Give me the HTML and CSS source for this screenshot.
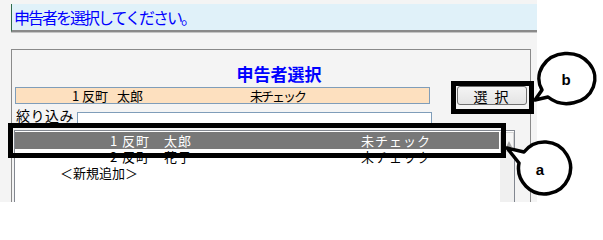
FILE: index.html
```html
<!DOCTYPE html>
<html lang="ja">
<head>
<meta charset="utf-8">
<title>申告者選択</title>
<link rel="stylesheet" href="styles.css">
</head>
<body>
<div class="screen">
  <div class="header">申告者を選択してください。</div>
  <div class="panel">
    <div class="title">申告者選択</div>
    <div class="select-row">
      <div class="current">
        <span class="num">1</span><span class="name">反町 太郎</span><span class="status">未チェック</span>
      </div>
      <button class="btn">選 択</button>
    </div>
    <div class="filter-row">
      <span class="filter-label">絞り込み</span>
      <div class="filter-input"></div>
    </div>
    <div class="list">
      <div class="rows">
        <div class="row selected"><span class="num">1</span><span class="name">反町　太郎</span><span class="status">未チェック</span></div>
        <div class="row"><span class="num">2</span><span class="name">反町　花子</span><span class="status">未チェック</span></div>
        <div class="row new">＜新規追加＞</div>
      </div>
      <div class="scrollbar"><div class="up"><span class="arrow"></span></div></div>
    </div>
  </div>
</div>
<div class="mark mark-list"></div>
<div class="mark mark-btn"></div>
<svg class="callouts" width="603" height="221" viewBox="0 0 603 221">
  <path d="M542,90 L535,100 L548,97 A28,25 0 1 0 542,90 Z" fill="#fff" stroke="#000" stroke-width="3.5" stroke-linejoin="round"/>
  <text x="566" y="85" class="callout-label">b</text>
  <path d="M524,152 L507,148 L519,163 A26,26 0 1 0 524,152 Z" fill="#fff" stroke="#000" stroke-width="3.5" stroke-linejoin="round"/>
  <text x="540" y="175" class="callout-label">a</text>
</svg>
</body>
</html>
```

FILE: styles.css
```css
html, body {
  margin: 0;
  padding: 0;
  background: #ffffff;
}
body {
  position: relative;
  width: 603px;
  height: 221px;
  overflow: hidden;
  font-family: "Noto Sans CJK JP", "Noto Sans", sans-serif;
  color: #000;
}
.screen {
  width: 537px;
  height: 202px;
  overflow: hidden;
  background: #f4f4f4;
  padding-top: 4px;
  box-sizing: border-box;
}
.header {
  margin-left: 11px;
  height: 26px;
  line-height: 26px;
  background: #e0f1f9;
  border-left: 1px solid #2e6b4a;
  border-bottom: 2px solid #8a8a8a;
  box-shadow: 0 1px 0 #c4c4c4;
  color: #0000ff;
  font-size: 16px;
  letter-spacing: -2px;
  padding-left: 2px;
  white-space: nowrap;
}
.panel {
  margin-top: 17px;
  margin-left: 11px;
  width: 520px;
  height: 160px;
  box-sizing: border-box;
  border: 1px solid #8a8a8a;
  border-bottom: none;
}
.title {
  padding-top: 14px;
  padding-left: 16px;
  height: 20px;
  line-height: 20px;
  text-align: center;
  font-size: 17px;
  font-weight: bold;
  color: #0000ff;
}
.select-row {
  display: flex;
  align-items: flex-start;
  margin-top: 2px;
}
.current {
  margin-top: 1px;
  margin-left: 3px;
  width: 415px;
  height: 17px;
  box-sizing: border-box;
  border: 1px solid #7f9db9;
  background: #fde0bf;
  display: flex;
  padding-left: 56px;
  font-size: 13px;
  line-height: 15px;
  white-space: pre;
}
.current .num { width: 10px; }
.current .name { width: 168px; word-spacing: 6px; }
.current .status { letter-spacing: -2px; }
.btn {
  margin-left: 27px;
  width: 70px;
  height: 19px;
  box-sizing: border-box;
  padding: 0;
  border: 1px solid #707070;
  border-radius: 3px;
  background: linear-gradient(#f4f4f4, #e4e4e4);
  font-family: "Noto Sans CJK JP", sans-serif;
  font-size: 14px;
  line-height: 16px;
  letter-spacing: 2px;
  color: #000;
}
.filter-row {
  display: flex;
  align-items: flex-start;
  margin-top: 3px;
  padding-left: 4px;
}
.filter-label {
  width: 61px;
  font-size: 14px;
  line-height: 14px;
  letter-spacing: 0.5px;
  white-space: nowrap;
}
.filter-input {
  margin-top: 4px;
  width: 355px;
  height: 16px;
  box-sizing: border-box;
  border: 1px solid #7f9db9;
  background: #fff;
}
.list {
  margin-top: 2px;
  margin-left: 2px;
  width: 501px;
  height: 90px;
  box-sizing: border-box;
  border: 1px solid #828790;
  background: #fff;
  display: flex;
  padding-top: 1px;
}
.rows {
  flex: 1;
}
.row {
  height: 16px;
  line-height: 16px;
  display: flex;
  padding-left: 95px;
  font-size: 13px;
  letter-spacing: 1px;
  white-space: nowrap;
}
.row.selected {
  height: 17px;
  line-height: 17px;
  background: #787878;
  color: #fff;
  margin-right: 1px;
}
.row .num { width: 12px; }
.row .name { width: 239px; }
.row.new {
  padding-left: 45px;
  letter-spacing: 0;
}
.scrollbar {
  width: 14px;
  background: #f0f0f0;
}
.up {
  height: 20px;
  box-sizing: border-box;
  border: 1px solid #d4d4d4;
  background: #f6f6f6;
  position: relative;
}
.arrow {
  position: absolute;
  left: 5px;
  top: 8px;
  width: 0;
  height: 0;
  border-left: 3px solid transparent;
  border-right: 3px solid transparent;
  border-bottom: 6px solid #a6a6a6;
}
.mark {
  position: absolute;
  box-sizing: border-box;
  border: 5px solid #000;
}
.mark-list {
  left: 8px;
  top: 123px;
  width: 498px;
  height: 35px;
}
.mark-btn {
  left: 451px;
  top: 81px;
  width: 83px;
  height: 33px;
}
.callouts {
  position: absolute;
  left: 0;
  top: 0;
}
.callout-label {
  font-family: "Liberation Sans", Arial, sans-serif;
  font-weight: bold;
  font-size: 15px;
  text-anchor: middle;
}
```
